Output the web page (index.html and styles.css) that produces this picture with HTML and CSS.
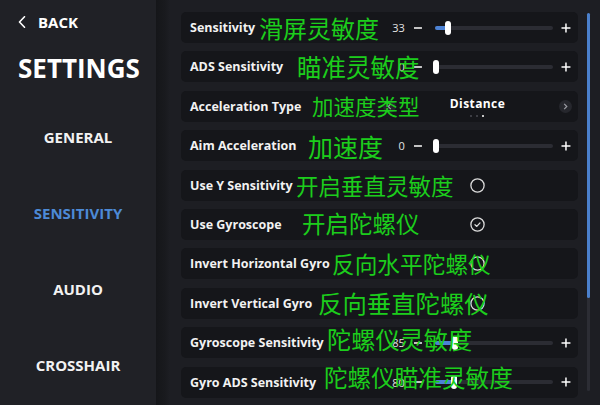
FILE: index.html
```html
<!DOCTYPE html>
<html lang="en">
<head>
    <meta charset="UTF-8">
    <meta name="viewport" content="width=device-width, initial-scale=1.0">
    <title>Settings - Sensitivity</title>
    <link rel="stylesheet" href="styles.css">
</head>
<body>
    <div class="screen">
        <aside class="sidebar">
            <div class="back">
                <svg class="back-icon" width="8" height="12" viewBox="0 0 8 12"><polyline points="6.5,0.8 1.5,6 6.5,11.2" fill="none" stroke="#fff" stroke-width="1.6" stroke-linecap="round" stroke-linejoin="round"/></svg>
                <span>BACK</span>
            </div>
            <h1 class="title">SETTINGS</h1>
            <nav class="nav">
                <a class="nav-item">GENERAL</a>
                <a class="nav-item active">SENSITIVITY</a>
                <a class="nav-item">AUDIO</a>
                <a class="nav-item">CROSSHAIR</a>
            </nav>
        </aside>

        <main class="content">
            <div class="list">
                <div class="row">
                    <span class="label">Sensitivity</span>
                    <span class="note n1">滑屏灵敏度</span>
                    <div class="control slider">
                        <span class="value">33</span>
                        <svg class="step minus" width="10" height="10" viewBox="0 0 10 10"><line x1="1" y1="5" x2="9" y2="5"/></svg>
                        <div class="track"><div class="fill" style="width: 11%"></div><div class="thumb" style="left: 11%"></div></div>
                        <svg class="step" width="10" height="10" viewBox="0 0 10 10"><line x1="0.5" y1="5" x2="9.5" y2="5"/><line x1="5" y1="0.5" x2="5" y2="9.5"/></svg>
                    </div>
                </div>

                <div class="row">
                    <span class="label">ADS Sensitivity</span>
                    <span class="note n2">瞄准灵敏度</span>
                    <div class="control slider">
                        <span class="value">0</span>
                        <svg class="step minus" width="10" height="10" viewBox="0 0 10 10"><line x1="1" y1="5" x2="9" y2="5"/></svg>
                        <div class="track"><div class="fill" style="width: 0%"></div><div class="thumb" style="left: 1%"></div></div>
                        <svg class="step" width="10" height="10" viewBox="0 0 10 10"><line x1="0.5" y1="5" x2="9.5" y2="5"/><line x1="5" y1="0.5" x2="5" y2="9.5"/></svg>
                    </div>
                </div>

                <div class="row">
                    <span class="label">Acceleration Type</span>
                    <span class="note n3">加速度类型</span>
                    <div class="control select">
                        <span class="arrow">
                            <svg width="5" height="7" viewBox="0 0 5 7"><polyline points="3.8,0.8 1.2,3.5 3.8,6.2"/></svg>
                        </span>
                        <div class="option">
                            <span class="option-text">Distance</span>
                            <span class="dots"><i></i><i></i><i class="on"></i></span>
                        </div>
                        <span class="arrow">
                            <svg width="5" height="7" viewBox="0 0 5 7"><polyline points="1.2,0.8 3.8,3.5 1.2,6.2"/></svg>
                        </span>
                    </div>
                </div>

                <div class="row">
                    <span class="label">Aim Acceleration</span>
                    <span class="note n4">加速度</span>
                    <div class="control slider">
                        <span class="value">0</span>
                        <svg class="step minus" width="10" height="10" viewBox="0 0 10 10"><line x1="1" y1="5" x2="9" y2="5"/></svg>
                        <div class="track"><div class="fill" style="width: 0%"></div><div class="thumb" style="left: 1%"></div></div>
                        <svg class="step" width="10" height="10" viewBox="0 0 10 10"><line x1="0.5" y1="5" x2="9.5" y2="5"/><line x1="5" y1="0.5" x2="5" y2="9.5"/></svg>
                    </div>
                </div>

                <div class="row">
                    <span class="label">Use Y Sensitivity</span>
                    <span class="note n5">开启垂直灵敏度</span>
                    <div class="control toggle">
                        <svg width="15" height="15" viewBox="0 0 15 15"><circle cx="7.5" cy="7.5" r="6.6"/></svg>
                    </div>
                </div>

                <div class="row">
                    <span class="label">Use Gyroscope</span>
                    <span class="note n6">开启陀螺仪</span>
                    <div class="control toggle">
                        <svg width="15" height="15" viewBox="0 0 15 15"><circle cx="7.5" cy="7.5" r="6.6"/><polyline points="5,7.8 6.8,9.4 10,5.9"/></svg>
                    </div>
                </div>

                <div class="row">
                    <span class="label">Invert Horizontal Gyro</span>
                    <span class="note n7">反向水平陀螺仪</span>
                    <div class="control toggle">
                        <svg width="15" height="15" viewBox="0 0 15 15"><circle cx="7.5" cy="7.5" r="6.6"/></svg>
                    </div>
                </div>

                <div class="row">
                    <span class="label">Invert Vertical Gyro</span>
                    <span class="note n8">反向垂直陀螺仪</span>
                    <div class="control toggle">
                        <svg width="15" height="15" viewBox="0 0 15 15"><circle cx="7.5" cy="7.5" r="6.6"/></svg>
                    </div>
                </div>

                <div class="row">
                    <span class="label">Gyroscope Sensitivity</span>
                    <span class="note n9">陀螺仪灵敏度</span>
                    <div class="control slider">
                        <span class="value">85</span>
                        <svg class="step minus" width="10" height="10" viewBox="0 0 10 10"><line x1="1" y1="5" x2="9" y2="5"/></svg>
                        <div class="track"><div class="fill" style="width: 17%"></div><div class="thumb" style="left: 17%"></div></div>
                        <svg class="step" width="10" height="10" viewBox="0 0 10 10"><line x1="0.5" y1="5" x2="9.5" y2="5"/><line x1="5" y1="0.5" x2="5" y2="9.5"/></svg>
                    </div>
                </div>

                <div class="row">
                    <span class="label">Gyro ADS Sensitivity</span>
                    <span class="note n10">陀螺仪瞄准灵敏度</span>
                    <div class="control slider">
                        <span class="value">80</span>
                        <svg class="step minus" width="10" height="10" viewBox="0 0 10 10"><line x1="1" y1="5" x2="9" y2="5"/></svg>
                        <div class="track"><div class="fill" style="width: 16%"></div><div class="thumb" style="left: 16%"></div></div>
                        <svg class="step" width="10" height="10" viewBox="0 0 10 10"><line x1="0.5" y1="5" x2="9.5" y2="5"/><line x1="5" y1="0.5" x2="5" y2="9.5"/></svg>
                    </div>
                </div>
            </div>

            <div class="scrollbar"><div class="scroll-thumb"></div></div>
        </main>
    </div>
</body>
</html>
```

FILE: styles.css
```css
body {
    margin: 0;
    width: 600px;
    height: 405px;
    overflow: hidden;
    background-color: #1d1e23;
    color: #fff;
    font-family: "Open Sans", "Noto Sans", sans-serif;
}
.screen {
    display: flex;
    height: 405px;
}

/* left menu */
.sidebar {
    width: 156px;
    flex-shrink: 0;
    background-color: #202126;
    display: flex;
    flex-direction: column;
}
.back {
    display: flex;
    align-items: center;
    gap: 12px;
    padding: 14px 0 0 18px;
    height: 16px;
    font-size: 15px;
    font-weight: 700;
    line-height: 16px;
}
.title {
    margin: 23px 0 0 18px;
    font-size: 26px;
    font-weight: 700;
    line-height: 30px;
}
.nav {
    display: flex;
    flex-direction: column;
    margin-top: 16px;
}
.nav-item {
    height: 76px;
    display: flex;
    align-items: center;
    justify-content: center;
    font-size: 15px;
    font-weight: 700;
    color: #f2f2f2;
}
.nav-item.active {
    color: #4d8ad6;
}

/* settings list */
.content {
    flex: 1;
    display: flex;
    padding: 12px 0 0 25px;
    background: linear-gradient(to right, #151619 0, #191a1e 9px, #1d1e23 14px);
}
.list {
    width: 397px;
    display: flex;
    flex-direction: column;
    gap: 8.4px;
}
.row {
    position: relative;
    height: 31px;
    flex-shrink: 0;
    box-sizing: border-box;
    display: flex;
    align-items: center;
    justify-content: space-between;
    padding: 0 6px 0 9px;
    background-color: #15161a;
    border-radius: 5px;
}
.label {
    font-size: 12.5px;
    font-weight: 700;
    color: #f2f2f2;
    white-space: nowrap;
}

/* green annotations over the rows */
.note {
    position: absolute;
    top: 50%;
    transform: translateY(-50%);
    font-family: "Noto Sans CJK SC", sans-serif;
    line-height: 1;
    color: #1ccd1c;
    white-space: nowrap;
    z-index: 2;
}
.n1 { left: 78px; font-size: 24px; }
.n2 { left: 116px; font-size: 24.5px; }
.n3 { left: 131px; font-size: 21.5px; }
.n4 { left: 127px; font-size: 25px; }
.n5 { left: 115px; font-size: 22.5px; }
.n6 { left: 121px; font-size: 23.5px; }
.n7 { left: 151px; font-size: 22.7px; }
.n8 { left: 137px; font-size: 24.4px; }
.n9 { left: 146px; font-size: 24.2px; margin-top: -4px; }
.n10 { left: 143px; font-size: 23.6px; margin-top: -4px; }

.control {
    width: 189px;
    height: 31px;
    display: flex;
    align-items: center;
}

/* slider */
.value {
    width: 22px;
    margin-right: 7px;
    text-align: right;
    font-size: 11px;
    color: #e4e4e4;
}
.step {
    stroke: #fff;
    stroke-width: 1.5;
    margin: 0 1px;
}
.minus {
    margin-right: 12px;
}
.track {
    position: relative;
    width: 119px;
    height: 4px;
    margin-right: 7px;
    background-color: #2b2c33;
    border-radius: 2px;
}
.fill {
    position: absolute;
    left: 0;
    top: 0;
    bottom: 0;
    background-color: #4c82d4;
    border-radius: 2px;
}
.thumb {
    position: absolute;
    top: 50%;
    width: 6px;
    height: 14px;
    margin: -7px 0 0 -3px;
    background-color: #fff;
    border-radius: 3px;
}

/* option selector */
.select {
    justify-content: space-between;
}
.arrow {
    width: 13px;
    height: 13px;
    border-radius: 50%;
    background-color: #26272d;
    display: flex;
    align-items: center;
    justify-content: center;
}
.arrow svg {
    fill: none;
    stroke: #9a9ba2;
    stroke-width: 1.2;
}
.option {
    display: flex;
    flex-direction: column;
    align-items: center;
    padding-top: 2px;
}
.option-text {
    font-size: 12px;
    font-weight: 700;
    line-height: 14px;
    letter-spacing: 0.4px;
}
.dots {
    display: flex;
    gap: 4px;
    margin-top: 4px;
}
.dots i {
    width: 2px;
    height: 2px;
    border-radius: 50%;
    background-color: #4a4b52;
}
.dots i.on {
    background-color: #fff;
}

/* round toggle */
.toggle {
    justify-content: center;
}
.toggle svg {
    fill: none;
    stroke: #dcdcdc;
    stroke-width: 1.3;
    stroke-linecap: round;
    stroke-linejoin: round;
}

/* scrollbar */
.scrollbar {
    width: 3px;
    height: 378px;
    margin: 1px 0 0 9px;
    background-color: #2c2d34;
    border-radius: 2px;
}
.scroll-thumb {
    height: 285px;
    background-color: #4b80cc;
    border-radius: 2px;
}
```
